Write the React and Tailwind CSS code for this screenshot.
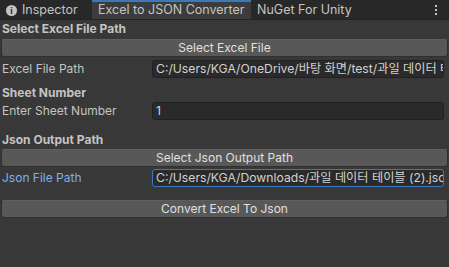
import React from "react";

const font = { fontFamily: "Inter, 'Noto Sans CJK KR', sans-serif" };

function Tab({ label, active, icon, width }) {
  return (
    <div
      className={`h-full shrink-0 flex items-center gap-[5px] pl-[6px] border-t-2 ${width} ${
        active ? "bg-[#3c3c3c] border-[#3a79bb]" : "bg-[#282828] border-transparent"
      }`}
    >
      {icon && (
        <span className="w-[11px] h-[11px] rounded-full bg-[#c4c4c4] text-[#282828] text-[9px] font-bold leading-[11px] text-center">
          i
        </span>
      )}
      <span className="text-[12.5px] text-[#c4c4c4] whitespace-nowrap">{label}</span>
    </div>
  );
}

function Header({ children }) {
  return <div className="h-[17px] flex items-center px-[2px] text-[12px] font-bold text-[#c4c4c4]">{children}</div>;
}

function Button({ children }) {
  return (
    <div className="mx-[1px] h-[18px] flex items-center justify-center rounded-[3px] bg-[#585858] border border-[#303030] border-t-[#5f5f5f] text-[12px] text-[#e0e0e0]">
      {children}
    </div>
  );
}

function Field({ label, value, focus }) {
  return (
    <div className="h-[20px] flex items-center px-[2px]">
      <div className={`w-[150px] shrink-0 text-[12px] ${focus ? "text-[#7bb0f0]" : "text-[#c4c4c4]"}`}>{label}</div>
      <div
        className={`flex-1 min-w-0 h-[18px] mr-[3px] flex items-center px-[3px] rounded-[3px] bg-[#2a2a2a] border overflow-hidden ${
          focus ? "border-[#3a79bb]" : "border-[#212121]"
        }`}
      >
        <span className="text-[12.2px] text-[#d2d2d2] whitespace-nowrap">{value}</span>
      </div>
    </div>
  );
}

export default function App() {
  return (
    <div className="w-[449px] h-[267px] bg-[#383838] flex flex-col overflow-hidden" style={font}>
      {/* Tab bar */}
      <div className="h-[20px] shrink-0 flex bg-[#282828] border-b border-[#232323]">
        <Tab label="Inspector" icon width="w-[92px]" />
        <Tab label="Excel to JSON Converter" active width="w-[159px]" />
        <Tab label="NuGet For Unity" width="w-[119px]" />
        <div className="flex-1" />
        <div className="w-[15px] flex flex-col items-center justify-center gap-[2px] mr-[6px]">
          <span className="w-[2px] h-[2px] bg-[#c4c4c4]" />
          <span className="w-[2px] h-[2px] bg-[#c4c4c4]" />
          <span className="w-[2px] h-[2px] bg-[#c4c4c4]" />
        </div>
      </div>

      <div className="flex flex-col">
        <Header>Select Excel File Path</Header>
        <div className="h-[2px]" />
        <Button>Select Excel File</Button>
        <div className="h-[2px]" />
        <Field label="Excel File Path" value="C:/Users/KGA/OneDrive/바탕 화면/test/과일 데이터 테이블.xlsx" />
        <div className="h-[6px]" />
        <div className="h-[16px] flex items-center px-[2px] text-[12px] font-bold text-[#c4c4c4]">Sheet Number</div>
        <Field label="Enter Sheet Number" value="1" />
        <div className="h-[10px]" />
        <Header>Json Output Path</Header>
        <div className="h-[1px]" />
        <Button>Select Json Output Path</Button>
        <div className="h-[1px]" />
        <Field label="Json File Path" value="C:/Users/KGA/Downloads/과일 데이터 테이블 (2).json" focus />
        <div className="h-[12px]" />
        <Button>Convert Excel To Json</Button>
      </div>
    </div>
  );
}
